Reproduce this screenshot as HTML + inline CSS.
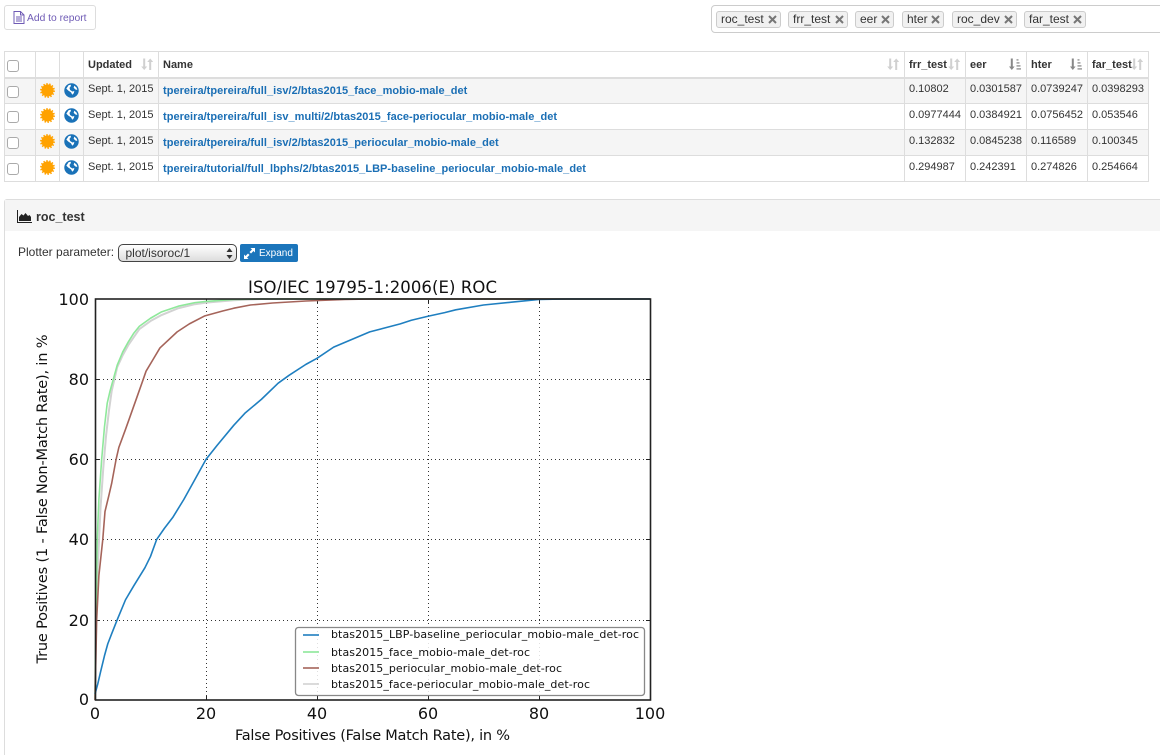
<!DOCTYPE html>
<html>
<head>
<meta charset="utf-8">
<style>
html,body{margin:0;padding:0;background:#fff;width:1160px;height:755px;overflow:hidden}
body{font-family:"Liberation Sans",sans-serif;color:#333;position:relative}
.abs{position:absolute}
#add{left:4px;top:5px;width:90px;height:23px;border:1px solid #ddd;border-radius:3px;color:#6f5bb5;font-size:10.300px;line-height:24px}
#add span{position:absolute;left:22px;top:1px;white-space:nowrap}
#add svg{position:absolute;left:8px;top:5px}
#tagbox{left:711px;top:5px;width:460px;height:26px;border:1px solid #ccc;border-radius:4px}
.tag{position:absolute;top:11px;height:15px;background:#f1f1f1;border:1px solid #ccc;border-radius:3px;font-size:12px;line-height:15px;color:#333;box-sizing:content-box}
.tag b{position:absolute;left:4px;top:0;font-weight:normal;white-space:nowrap}
.tag svg{position:absolute;right:3px;top:3px}
table{position:absolute;left:4px;top:51px;border-collapse:collapse;table-layout:fixed;width:1144px;font-size:11px;color:#333}
td,th{border:1px solid #ddd;padding:0 0 0 4px;height:26px;box-sizing:border-box;white-space:nowrap;overflow:visible;text-align:left;position:relative;line-height:13px;vertical-align:middle}
th{border-bottom:2px solid #ddd;font-weight:bold;color:#333;padding-top:2px}
td{padding-bottom:2px}
tr.o td{background:#f5f5f5}
td a{color:#1b6fb5;font-weight:bold;position:relative;top:1.500px;letter-spacing:.03px}
.cb{position:absolute;left:2px;top:7px;width:10px;height:10px;border:1px solid #aaa;border-radius:3px;background:#fff}
th .cb{top:8px}
.ic{position:absolute;left:4px;top:4px}
.s{position:absolute;right:5px;top:6px}
#panel{left:4px;top:199px;width:1170px;height:560px;border:1px solid #ddd;border-radius:3px 0 0 0;box-sizing:border-box}
#phead{position:absolute;left:0;top:0;right:0;height:31px;background:#f5f5f5}
#phead b{position:absolute;left:31px;top:10px;font-size:12.500px;line-height:15px;color:#333}
#phead svg{position:absolute;left:12px;top:10px}
#plab{left:18px;top:245px;font-size:12px;line-height:14px;color:#333}
#sel{left:118px;top:244px;width:117px;height:16px;border:1px solid #444;border-radius:5px;background:linear-gradient(#fff,#ddd);font-size:12px;line-height:16px;color:#333}
#sel span{position:absolute;left:6.500px;top:0}
#sel svg{position:absolute;right:3px;top:3px}
#exp{left:240px;top:244px;width:58px;height:18px;background:#1b75bb;border-radius:2px;color:#fff;font-size:10px;line-height:19px}
#exp span{position:absolute;left:19px;top:0}
#exp svg{position:absolute;left:4px;top:4px}
#plot{left:0;top:0;filter:blur(.3px)}
#plot text{font-family:"DejaVu Sans",sans-serif;fill:#111}
</style>
</head>
<body>
<svg width="0" height="0" style="position:absolute">
<defs>
<symbol id="sun" viewBox="0 0 16 16"><circle cx="8" cy="8" r="6.500" fill="#ffa200"/><circle cx="8" cy="8" r="6.900" fill="none" stroke="#ffa200" stroke-width="2" stroke-dasharray="1.550 1.550"/></symbol>
<symbol id="globe" viewBox="0 0 16 16"><circle cx="8" cy="8" r="7.700" fill="#1a72b8"/><path fill="#fff" d="M2.500 6 5 2.300 7.500 1.800 7 3.800 5.800 5.200 6.500 7.500 9 9 11 8.500 10.500 10.800 8.800 12.500 7.500 10 4.500 8Z M11 2.800 13.500 5 14.200 7.500 12 6.800 10.300 5Z"/></symbol>
<symbol id="sort" viewBox="0 0 12 12"><path fill="#d0d0d0" d="M2.200 0.500h2v8h2l-3 3.500-3-3.500h2Z M8.200 12h2v-8h2l-3-3.500-3 3.500h2Z"/></symbol>
<symbol id="sorted" viewBox="0 0 12 12"><path fill="#888" d="M1.800 0.500h2v8h1.800l-2.800 3.500-2.800-3.500h1.800Z"/><path fill="#aaa" d="M7.500 1h2v1.800h-2Z M7.500 4h3v1.800h-3Z M7.500 7h4v1.800h-4Z M7.500 10h4.500v1.800H7.500Z"/></symbol>
<symbol id="x" viewBox="0 0 9 9"><path stroke="#777" stroke-width="2" d="M1 1 8 8M8 1 1 8"/></symbol>
</defs>
</svg>

<div id="add" class="abs">
<svg width="12" height="13" viewBox="0 0 12 13"><path fill="none" stroke="#6f5bb5" stroke-width="1" d="M1 .5h6.500l3.500 3.500v8.500h-10Z M7.500 .5v3.500h3.500 M3 6h6 M3 8h6 M3 10h6"/></svg>
<span>Add to report</span>
</div>

<div id="tagbox" class="abs"></div>
<div class="tag" style="left:716px;width:63px"><b>roc_test</b><svg width="9" height="9"><use href="#x"/></svg></div>
<div class="tag" style="left:788px;width:58px"><b>frr_test</b><svg width="9" height="9"><use href="#x"/></svg></div>
<div class="tag" style="left:855px;width:37px"><b>eer</b><svg width="9" height="9"><use href="#x"/></svg></div>
<div class="tag" style="left:902px;width:40px"><b>hter</b><svg width="9" height="9"><use href="#x"/></svg></div>
<div class="tag" style="left:952px;width:63px"><b>roc_dev</b><svg width="9" height="9"><use href="#x"/></svg></div>
<div class="tag" style="left:1024px;width:60px"><b>far_test</b><svg width="9" height="9"><use href="#x"/></svg></div>

<table>
<colgroup><col style="width:31px"><col style="width:24px"><col style="width:24px"><col style="width:75px"><col style="width:746px"><col style="width:61px"><col style="width:61px"><col style="width:61px"><col style="width:61px"></colgroup>
<tr>
<th><span class="cb"></span></th><th></th><th></th>
<th>Updated<svg class="s" width="12" height="12"><use href="#sort"/></svg></th>
<th>Name<svg class="s" width="12" height="12"><use href="#sort"/></svg></th>
<th>frr_test<svg class="s" width="12" height="12"><use href="#sort"/></svg></th>
<th>eer<svg class="s" width="12" height="12"><use href="#sorted"/></svg></th>
<th>hter<svg class="s" width="12" height="12"><use href="#sorted"/></svg></th>
<th>far_test<svg class="s" width="12" height="12"><use href="#sort"/></svg></th>
</tr>
<tr class="o">
<td><span class="cb"></span></td><td><svg class="ic" width="15" height="15"><use href="#sun"/></svg></td><td><svg class="ic" width="15" height="15"><use href="#globe"/></svg></td>
<td>Sept. 1, 2015</td><td><a>tpereira/tpereira/full_isv/2/btas2015_face_mobio-male_det</a></td><td>0.10802</td><td>0.0301587</td><td>0.0739247</td><td>0.0398293</td>
</tr>
<tr>
<td><span class="cb"></span></td><td><svg class="ic" width="15" height="15"><use href="#sun"/></svg></td><td><svg class="ic" width="15" height="15"><use href="#globe"/></svg></td>
<td>Sept. 1, 2015</td><td><a>tpereira/tpereira/full_isv_multi/2/btas2015_face-periocular_mobio-male_det</a></td><td>0.0977444</td><td>0.0384921</td><td>0.0756452</td><td>0.053546</td>
</tr>
<tr class="o">
<td><span class="cb"></span></td><td><svg class="ic" width="15" height="15"><use href="#sun"/></svg></td><td><svg class="ic" width="15" height="15"><use href="#globe"/></svg></td>
<td>Sept. 1, 2015</td><td><a>tpereira/tpereira/full_isv/2/btas2015_periocular_mobio-male_det</a></td><td>0.132832</td><td>0.0845238</td><td>0.116589</td><td>0.100345</td>
</tr>
<tr>
<td><span class="cb"></span></td><td><svg class="ic" width="15" height="15"><use href="#sun"/></svg></td><td><svg class="ic" width="15" height="15"><use href="#globe"/></svg></td>
<td>Sept. 1, 2015</td><td><a>tpereira/tutorial/full_lbphs/2/btas2015_LBP-baseline_periocular_mobio-male_det</a></td><td>0.294987</td><td>0.242391</td><td>0.274826</td><td>0.254664</td>
</tr>
</table>

<div id="panel" class="abs">
<div id="phead">
<svg width="15" height="13" viewBox="0 0 15 13"><path fill="none" stroke="#222" d="M.5 0v12.500h14.500"/><path fill="#222" d="M2 11V7l2.500-3 2 1.500L8.500 3l2.500 3 1.500-1 1.500 2v4Z"/></svg>
<b>roc_test</b>
</div>
</div>
<div id="plab" class="abs">Plotter parameter:</div>
<div id="sel" class="abs"><span>plot/isoroc/1</span><svg width="7" height="11" viewBox="0 0 7 11"><path fill="#333" d="M3.500 0 6.500 4h-6Z M3.500 11 .5 7h6Z"/></svg></div>
<div id="exp" class="abs"><svg width="11" height="11" viewBox="0 0 11 11"><path fill="#fff" d="M6.500 0H11v4.500L9.500 3 7 5.500 5.500 4 8 1.500Z M4.500 11H0V6.500L1.500 8 4 5.500 5.500 7 3 9.500Z"/></svg><span>Expand</span></div>

<svg id="plot" class="abs" width="1160" height="755" viewBox="0 0 1160 755">
<g stroke="#333" stroke-width="1" stroke-dasharray="1 3" fill="none">
<path d="M206.500 299V700M317.500 299V700M428.500 299V700M539.500 299V700"/>
<path d="M95 379.500H650M95 459.500H650M95 539.500H650M95 620.500H650"/>
</g>
<g stroke="#222" stroke-width="1" fill="none">
<path d="M206.500 299v4M317.500 299v4M428.500 299v4M539.500 299v4M206.500 700v-4M317.500 700v-4M428.500 700v-4M539.500 700v-4"/>
<path d="M95 379.500h4M95 459.500h4M95 539.500h4M95 620.500h4M650 379.500h-4M650 459.500h-4M650 539.500h-4M650 620.500h-4"/>
</g>
<g transform="translate(95,700) scale(5.55,-4.01)" fill="none" stroke-width="1.600" stroke-linejoin="round">
<polyline vector-effect="non-scaling-stroke" stroke="#d2d2d2" style="stroke-width:2" points="0,0 0.2,18 0.5,33 1,48 1.500,58 2,66 2.500,72 3,77 4,83 5,86 6,88.500 7,90.500 8,92.500 10,94.500 12,96 15,97.700 18,98.700 20,99.100 25,99.700 30,100 100,100"/>
<polyline vector-effect="non-scaling-stroke" stroke="#8ee89a" points="0,0 0.2,22 0.400,40 0.700,50 1.200,60 1.700,68 2.200,74 2.700,77 3.300,80 4,83.500 5,86.800 6,89.300 7,91.500 8,93.200 10,95.200 12,96.800 15,98.200 18,99.100 20,99.400 25,99.900 30,100 100,100"/>
<polyline vector-effect="non-scaling-stroke" stroke="#a5645a" points="0,0 0.300,20 0.700,31 1.400,40 1.800,47 2.500,51 3,54 3.800,60 4.300,63 5.500,67.500 6.500,71.400 7.500,75.300 8.700,80 9.200,82 10.500,85 11.700,87.800 14.800,91.800 17,93.800 19.800,95.800 23,97 25,97.700 28,98.500 32,99 38,99.500 45,99.900 50,100 100,100"/>
<polyline vector-effect="non-scaling-stroke" stroke="#1f7fc0" points="0,1.500 0.500,4 1,7 1.700,11 2.300,14 3,16.500 4,20 5.500,25 7,28.500 9,33 10,35.800 11.100,40 12.500,42.800 14,45.500 16,50 18,55 20,60 22,63.500 25,68.500 27,71.500 30,75 33,79 35,81 38,83.700 40,85.200 43,88 49.500,91.800 55,93.800 57,94.700 60,95.700 63,96.600 65,97.300 70,98.500 75,99.200 80,99.900 85,100 100,100"/>
</g>
<rect x="95.500" y="299" width="555" height="401" fill="none" stroke="#222" stroke-width="1.600"/>
<rect x="295.500" y="627.500" width="349" height="68" rx="3" fill="#fff" fill-opacity=".85" stroke="#888" stroke-width="1.300"/>
<g fill="none" stroke-width="1.600">
<path d="M303 635h16" stroke="#1f7fc0"/>
<path d="M303 652h16" stroke="#8ee89a"/>
<path d="M303 668h16" stroke="#a5645a"/>
<path d="M303 684h16" stroke="#d2d2d2"/>
</g>
<g font-size="11">
<text x="331" y="638" textLength="308">btas2015_LBP-baseline_periocular_mobio-male_det-roc</text>
<text x="331" y="656" textLength="199">btas2015_face_mobio-male_det-roc</text>
<text x="331" y="672" textLength="231">btas2015_periocular_mobio-male_det-roc</text>
<text x="331" y="688" textLength="259">btas2015_face-periocular_mobio-male_det-roc</text>
</g>
<text x="372.500" y="293" font-size="16.500" text-anchor="middle" textLength="249">ISO/IEC 19795-1:2006(E) ROC</text>
<g font-size="16" text-anchor="end">
<text x="89" y="305">100</text><text x="89" y="385">80</text><text x="89" y="465">60</text><text x="89" y="545">40</text><text x="89" y="626">20</text><text x="89" y="705">0</text>
</g>
<g font-size="16" text-anchor="middle">
<text x="95" y="719">0</text><text x="206" y="719">20</text><text x="317" y="719">40</text><text x="428" y="719">60</text><text x="539" y="719">80</text><text x="650" y="719">100</text>
</g>
<text x="372.500" y="740" font-size="14.500" text-anchor="middle" textLength="275">False Positives (False Match Rate), in %</text>
<text transform="translate(47,499) rotate(-90)" font-size="14.500" text-anchor="middle" textLength="329">True Positives (1 - False Non-Match Rate), in %</text>
</svg>
</body>
</html>
